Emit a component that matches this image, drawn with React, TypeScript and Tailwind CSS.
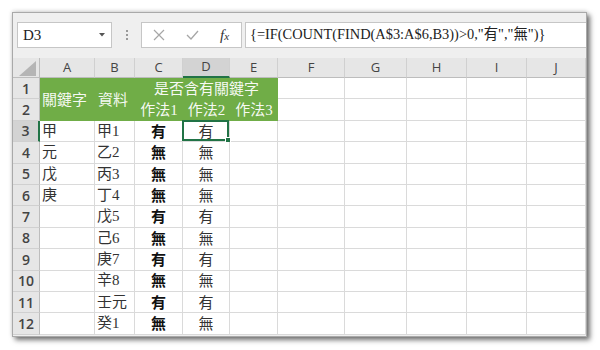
import React from 'react';

const COLS = ['A', 'B', 'C', 'D', 'E', 'F', 'G', 'H', 'I', 'J'];

const DATA = [
  { a: '甲', b: '甲1', v: '有' },
  { a: '元', b: '乙2', v: '無' },
  { a: '戊', b: '丙3', v: '無' },
  { a: '庚', b: '丁4', v: '無' },
  { a: '', b: '戊5', v: '有' },
  { a: '', b: '己6', v: '無' },
  { a: '', b: '庚7', v: '有' },
  { a: '', b: '辛8', v: '無' },
  { a: '', b: '壬元', v: '有' },
  { a: '', b: '癸1', v: '無' },
];

const cell = 'border-r border-b border-[#dadada] bg-white flex items-center';
const serif = "font-['Liberation_Serif','Noto_Sans_CJK_TC',serif]";
const sansCjk = "font-['Noto_Sans_CJK_TC',sans-serif]";

const RowHead = ({ n, active }: { n: number; active?: boolean }) => (
  <div
    className={`flex items-center justify-center border-b border-[#d0d0d0] text-[14px] font-semibold text-[#444] font-['Open_Sans',sans-serif] ${
      active ? 'bg-[#d3d3d3] border-r-2 border-r-[#217346]' : 'bg-[#e6e6e6] border-r border-r-[#bdbdbd]'
    }`}
  >
    {n}
  </div>
);

const Empties = ({ n }: { n: number }) => (
  <>
    {Array.from({ length: n }).map((_, i) => (
      <div key={i} className={cell} />
    ))}
  </>
);

export default function App() {
  return (
    <div className="w-[600px] h-[350px] bg-white pl-[12px] pt-[12px]">
      <div className="w-[575px] h-[325px] border border-[#a9a9a9] bg-[#efefef] flex flex-col shadow-[3px_3px_5px_rgba(0,0,0,0.55),0_-1px_4px_rgba(0,0,0,0.15)]">
        {/* formula bar */}
        <div className="h-[45px] flex items-start pt-[9px] pl-[4px]">
          <div className="w-[95px] h-[26px] bg-white border border-[#c6c6c6] flex items-center justify-between pl-[5px] pr-[6px]">
            <span className={`${serif} text-[15px] text-[#222]`}>D3</span>
            <svg width="6" height="4" viewBox="0 0 6 4">
              <path d="M0 0h6L3 3.5z" fill="#555" />
            </svg>
          </div>
          <div className="w-[29px] h-[26px] flex items-center justify-center">
            <div className="flex flex-col gap-[2px]">
              <span className="w-[2px] h-[2px] bg-[#9a9a9a]" />
              <span className="w-[2px] h-[2px] bg-[#9a9a9a]" />
              <span className="w-[2px] h-[2px] bg-[#9a9a9a]" />
            </div>
          </div>
          <div className="w-[101px] h-[26px] bg-white border border-[#c6c6c6] flex items-center pl-[11px]">
            <svg width="12" height="12" viewBox="0 0 12 12">
              <path d="M1 1l10 10M11 1L1 11" stroke="#a6a6a6" strokeWidth="1.2" fill="none" />
            </svg>
            <svg className="ml-[21px]" width="13" height="10" viewBox="0 0 13 10">
              <path d="M1 5l4 4 7-8" stroke="#a6a6a6" strokeWidth="1.3" fill="none" />
            </svg>
            <span className={`ml-[21px] ${serif} italic text-[15px] text-[#333] leading-none`}>
              f<span className="text-[11px]">x</span>
            </span>
          </div>
          <div className="flex-1 ml-[3px] h-[26px] bg-white border-t border-b border-l border-[#c6c6c6] flex items-center pl-[4px]">
            <span className={`${serif} text-[14.4px] text-[#222] whitespace-nowrap`}>
              {'{=IF(COUNT(FIND(A$3:A$6,B3))>0,"有","無")}'}
            </span>
          </div>
        </div>

        {/* sheet grid */}
        <div className="grid grid-cols-[27px_55px_40px_48px_47px_48px_67px_62px_60px_60px_59px] grid-rows-[20px_repeat(12,21.4px)] bg-white">
          <div className="bg-[#e6e6e6] border-r border-b border-[#bdbdbd] flex items-end justify-end pr-[3px] pb-[1px]">
            <svg width="17" height="15" viewBox="0 0 17 15">
              <path d="M17 0V15H0z" fill="#b5b5b5" />
            </svg>
          </div>
          {COLS.map((c) => (
            <div
              key={c}
              className={`flex items-center justify-center text-[13px] font-['Open_Sans',sans-serif] text-[#444] border-r border-[#d0d0d0] ${
                c === 'D' ? 'bg-[#d3d3d3] border-b-2 border-b-[#217346]' : 'bg-[#e6e6e6] border-b border-b-[#bdbdbd]'
              }`}
            >
              {c}
            </div>
          ))}

          {/* row 1 */}
          <RowHead n={1} />
          <div className={`row-span-2 bg-[#70ad47] flex items-center pl-[2px] text-[15px] text-white/95 ${sansCjk}`}>關鍵字</div>
          <div className={`row-span-2 bg-[#70ad47] flex items-center pl-[3px] text-[15px] text-white/95 ${sansCjk}`}>資料</div>
          <div className={`col-span-3 bg-[#70ad47] flex items-center justify-center text-[15px] text-white/95 ${sansCjk}`}>是否含有關鍵字</div>
          <Empties n={5} />

          {/* row 2 */}
          <RowHead n={2} />
          {['作法1', '作法2', '作法3'].map((t) => (
            <div
              key={t}
              className={`bg-[#70ad47] flex items-center justify-center text-[15px] text-white/95 whitespace-nowrap ${serif}`}
            >
              {t}
            </div>
          ))}
          <Empties n={5} />

          {DATA.map((r, i) => (
            <React.Fragment key={i}>
              <RowHead n={i + 3} active={i === 0} />
              <div className={`${cell} pl-[2px] text-[15px] text-[#333] ${serif}`}>{r.a}</div>
              <div className={`${cell} pl-[2px] text-[15px] text-[#333] ${serif}`}>{r.b}</div>
              <div className={`${cell} justify-center text-[15px] font-semibold text-[#111] ${sansCjk}`}>{r.v}</div>
              <div className={`${cell} relative justify-center text-[15px] text-[#333] ${sansCjk}`}>
                {r.v}
                {i === 0 && (
                  <div className="absolute -left-px -top-px right-0 bottom-0 border-2 border-[#217346]">
                    <div className="absolute -right-[4px] -bottom-[4px] w-[6px] h-[6px] bg-[#217346] border border-white" />
                  </div>
                )}
              </div>
              <Empties n={6} />
            </React.Fragment>
          ))}
        </div>
      </div>
    </div>
  );
}
